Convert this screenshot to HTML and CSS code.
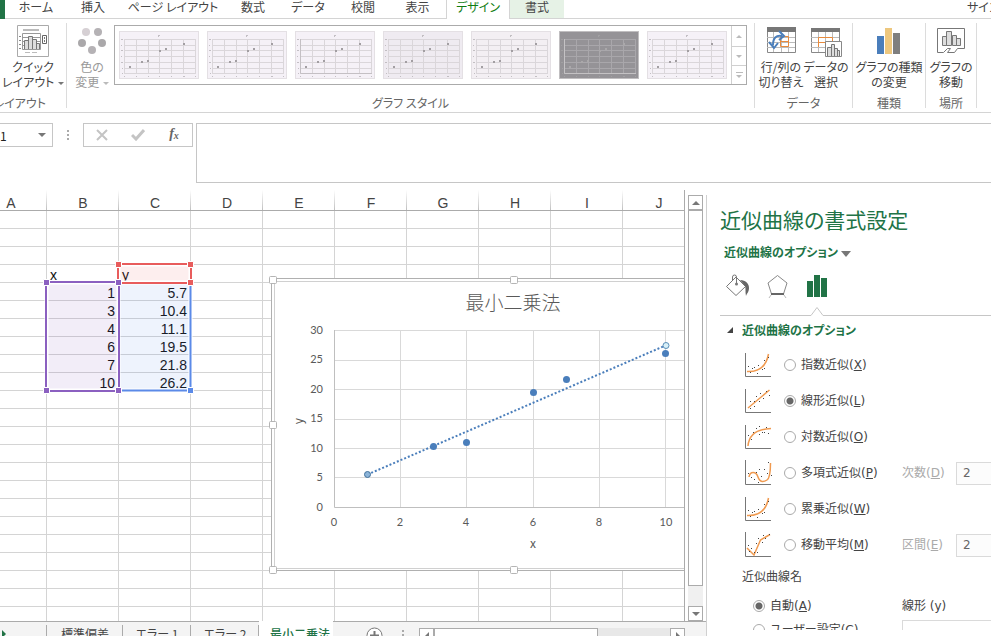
FILE: index.html
```html
<!DOCTYPE html>
<html lang="ja">
<head>
<meta charset="utf-8">
<title>最小二乗法</title>
<link rel="stylesheet" href="styles.css">
</head>
<body>
<svg class="defs" aria-hidden="true">
  <symbol id="thumb" viewBox="0 0 80 48">
    <g fill="none" stroke="currentColor">
      <path d="M5 8.500H77M5 14.500H77M5 19.500H77M5 25.500H77M5 31.500H77M5 37.500H77M5 42.500H77M5.500 8V43M17.500 8V43M29.500 8V43M40.500 8V43M52.500 8V43M64.500 8V43M76.500 8V43"/>
    </g>
    <g class="dots">
      <path d="M10 35h2v2h-2zM22 30h2v2h-2zM28 29h2v2h-2zM40 19h2v2h-2zM46 17h2v2h-2zM64 12h2v2h-2z"/>
      <path opacity=".6" d="M39 4h2v1h-2zM39 5h1v1h-1zM2 8h2v1h-2zM2 14h1v1h-1zM2 19h2v1h-2zM2 25h1v1h-1zM2 31h2v1h-2zM3 37h1v1h-1zM3 42h1v1h-1zM5 45h1v1h-1zM17 45h1v1h-1zM29 45h1v1h-1zM40 45h1v1h-1zM52 45h1v1h-1zM64 45h2v1h-2zM76 45h1v1h-1z"/>
    </g>
  </symbol>
  <symbol id="curve-up" viewBox="0 0 28 26">
    <path class="axis" d="M.5 1V24.500H26"/>
    <path class="curve" d="M2 19.500C13 20 21 16 23.500 2"/>
    <path class="pts" d="M3 14h1v1h-1zM5 20h1v1h-1zM7 16h1v1h-1zM9 15h1v1h-1zM12 21h1v1h-1zM13 13h1v1h-1zM17 17h1v1h-1zM19 16h1v1h-1zM19 8h1v1h-1zM23 5h1v1h-1z"/>
  </symbol>
</svg>

<nav class="tabs" aria-label="リボン">
  <span class="file"></span>
  <a href="#">ホーム</a><a href="#">挿入</a><a href="#">ページ レイアウト</a><a href="#">数式</a><a href="#">データ</a><a href="#">校閲</a><a href="#">表示</a>
  <a href="#" class="active">デザイン</a><a href="#" class="context">書式</a><a href="#" class="signin">サインイン</a>
</nav>

<section class="ribbon">
  <div class="group layout">
    <div class="tools">
      <button class="big">
        <svg width="32" height="32" viewBox="0 0 32 32"><path d="M.5.5h31v31H.5z" fill="#fff" stroke="#aaa"/><path d="M6 4h16v2H6zM8 27h5v1H8zM15 27h5v1h-5z" fill="#bbb"/><path d="M2 11h2v1H2zM2 15h2v1H2zM2 19h2v1H2zM2 23h2v1H2z" fill="#888"/><path d="M5.500 8.500h18v16h-18zM5 12.500h18M5 16.500h18M5 20.500h18" fill="none" stroke="#999"/><path d="M7.500 24V15.500h4V24M11.500 24V11.500h4V24M15.500 24V14.500h4V24M19.500 24V18.500h3V24" fill="#ddd" stroke="#777"/><path d="M25.500 10.500h4v8h-4z" fill="#fff" stroke="#666"/><path d="M27 12h1v2h-1zM27 15h1v2h-1z" fill="#777"/></svg>
        <span>クイック<br>レイアウト <i class="caret"></i></span>
      </button>
    </div>
    <div class="caption">グラフのレイアウト</div>
  </div>
  <div class="group styles">
    <div class="tools">
      <button class="big colors" disabled>
        <svg width="32" height="32" viewBox="0 0 32 32"><g fill="#b5b2b5"><circle cx="10" cy="7" r="4" fill="#d6d0d4"/><circle cx="22" cy="7" r="4"/><circle cx="6" cy="18" r="4" fill="#aaa8aa"/><circle cx="26" cy="18" r="4" fill="#aaa8aa"/><circle cx="16" cy="25" r="4"/></g></svg>
        <span>色の<br>変更 <i class="caret"></i></span>
      </button>
      <div class="gallery">
        <button aria-label="スタイル 1"><svg><use href="#thumb"/></svg></button>
        <button aria-label="スタイル 2"><svg><use href="#thumb"/></svg></button>
        <button aria-label="スタイル 3"><svg><use href="#thumb"/><path d="M5.500 8V42.500H77" fill="none" stroke="#c4c0c4"/></svg></button>
        <button aria-label="スタイル 4" class="shade"><svg><use href="#thumb"/></svg></button>
        <button aria-label="スタイル 5" class="fade"><svg><use href="#thumb"/></svg></button>
        <button aria-label="スタイル 6" class="dark"><svg><use href="#thumb"/><path d="M5.500 8V42.500H77" fill="none" stroke="#c4c2c4"/></svg></button>
        <button aria-label="スタイル 7"><svg><use href="#thumb"/></svg></button>
        <div class="more">
          <button aria-label="上へ"><i class="caret up"></i></button>
          <button aria-label="下へ"><i class="caret"></i></button>
          <button aria-label="その他" class="all"><i class="caret"></i></button>
        </div>
      </div>
    </div>
    <div class="caption">グラフ スタイル</div>
  </div>
  <div class="group data">
    <div class="tools">
      <button class="big">
        <svg width="32" height="32" viewBox="0 0 32 32"><path d="M2 2h29v5H2z" fill="#777"/><path d="M2.500 7v20.500h28V7" fill="#fff" stroke="#888"/><path d="M8.500 7v20M16.500 7v20M23.500 7v20M2 12.500h28M2 17.500h28M2 22.500h28" stroke="#bbb"/><path d="M15.500 11.500h8v10h-8zM15 16.500h8" fill="none" stroke="#e88b3d"/><path d="M8 20C8 13 11 10 17 11" fill="none" stroke="#4a7ebb" stroke-width="2"/><path d="M4 17l5 6 4-5M14 6l5 5-5 4" fill="none" stroke="#4a7ebb" stroke-width="2"/></svg>
        <span>行/列の<br>切り替え</span>
      </button>
      <button class="big">
        <svg width="32" height="32" viewBox="0 0 32 32"><path d="M1 3h29v4H1z" fill="#777"/><path d="M1.500 7v20.500h28V7" fill="#fff" stroke="#888"/><path d="M8.500 7v20M15.500 7v20M22.500 7v20M1 12.500h28M1 17.500h28M1 22.500h28" stroke="#bbb"/><path d="M8.500 22V12.500h14V16M8 17.500h7" fill="none" stroke="#e88b3d"/><path d="M15.500 16.500h16v15h-16z" fill="#fff" stroke="#888"/><path d="M17.500 31v-8.500h4V31M21.500 31V19.500h3V31M24.500 31v-7.500h3V31M27.500 31v-5.500h2V31" fill="#ddd" stroke="#777"/></svg>
        <span>データの<br>選択</span>
      </button>
    </div>
    <div class="caption">データ</div>
  </div>
  <div class="group kind">
    <div class="tools">
      <button class="big">
        <svg width="32" height="32" viewBox="0 0 32 32"><path d="M4 11h7v18H4z" fill="#4a7ebb"/><path d="M12 3h7v26h-7z" fill="#edc77e"/><path d="M20 8h7v21h-7z" fill="#7f7f7f"/></svg>
        <span>グラフの種類<br>の変更</span>
      </button>
    </div>
    <div class="caption">種類</div>
  </div>
  <div class="group place">
    <div class="tools">
      <button class="big">
        <svg width="32" height="32" viewBox="0 0 32 32"><path d="M2.500 27.500v-24h27v20h-7l-3 4h-7l3-4h-3l-4 4z" fill="#fff" stroke="#777"/><path d="M7.500 20.500v-9h4v9zM11.500 20.500v-14h5v14zM17.500 20.500v-10h4v10zM21.500 20.500v-7h4v7z" fill="#ddd" stroke="#777"/></svg>
        <span>グラフの<br>移動</span>
      </button>
    </div>
    <div class="caption">場所</div>
  </div>
</section>

<section class="formula">
  <div class="namebox"><input aria-label="名前ボックス" value="1"><i class="caret"></i></div>
  <i class="grip"></i>
  <div class="fxbox">
    <button aria-label="キャンセル"><svg width="12" height="12" viewBox="0 0 12 12"><path d="M1 1l10 10M11 1L1 11" stroke="#c4c4c4" stroke-width="2"/></svg></button>
    <button aria-label="入力"><svg width="14" height="12" viewBox="0 0 14 12"><path d="M1 6l4 4 8-9" fill="none" stroke="#c4c4c4" stroke-width="3"/></svg></button>
    <button aria-label="関数の挿入" class="fx">f<sub>x</sub></button>
  </div>
  <textarea aria-label="数式バー"></textarea>
</section>

<main>
  <section class="book">
    <div class="view">
      <div class="sheet">
        <table>
          <thead><tr><th>A</th><th>B</th><th>C</th><th>D</th><th>E</th><th>F</th><th>G</th><th>H</th><th>I</th><th>J</th></tr></thead>
          <tbody id="cells"></tbody>
        </table>
        <svg class="ranges" width="152" height="134" viewBox="42 260 152 134">
          <path d="M46 282h72v108H46z" fill="#7b4fb8" fill-opacity=".1"/>
          <path d="M118 282h72v108h-72z" fill="#5b8def" fill-opacity=".1"/>
          <path d="M118 264h72v18h-72z" fill="#e85a5a" fill-opacity=".1"/>
          <path d="M118.500 264.500h72v18h-72zM46.500 282.500h72v108h-72zM118 390.500h72.500V282" fill="none" stroke="#fff" stroke-width="4"/>
          <path d="M118 390.500h72.500V282" fill="none" stroke="#5b8ae8" stroke-width="2"/>
          <path d="M118 264h73v19h-73z" fill="none" stroke="#e85c5c" stroke-width="2"/>
          <path d="M46 282h73v109H46z" fill="none" stroke="#8b60c0" stroke-width="2"/>
          <g stroke="#fff"><path d="M115.500 261.500h6v6h-6zM187.500 261.500h6v6h-6zM187.500 279.500h6v6h-6z" fill="#e85c5c"/><path d="M43.500 279.500h6v6h-6zM115.500 279.500h6v6h-6zM43.500 387.500h6v6h-6zM115.500 387.500h6v6h-6z" fill="#8b60c0"/><path d="M187.500 387.500h6v6h-6z" fill="#5b8ae8"/></g>
        </svg>
        <svg class="chart" width="490" height="300" viewBox="269 275 490 300">
          <path d="M271.500 278.500h486v292h-486z" fill="#fff" stroke="#b0b0b0"/>
          <path d="M274.500 281.500h480v287h-480z" fill="#fff" stroke="#d0d0d0"/>
          <path d="M334 330.500h397M334 360.500h397M334 389.500h397M334 419.500h397M334 448.500h397M334 477.500h397M400.500 330v177M466.500 330v177M533.500 330v177M599.500 330v177M665.500 330v177" stroke="#d9d9d9"/>
          <path d="M334.500 330V507.500H731" fill="none" stroke="#bfbfbf"/>
          <path d="M367.500 474.500L665.500 345.500" stroke="#4a7ebb" stroke-width="2" stroke-dasharray="2 2"/>
          <g fill="#4a7ebb"><circle cx="433.500" cy="446.500" r="3.500"/><circle cx="466.500" cy="442.500" r="3.500"/><circle cx="533.500" cy="392.500" r="3.500"/><circle cx="566.500" cy="379.500" r="3.500"/><circle cx="665.500" cy="353.500" r="3.500"/></g>
          <circle cx="367.500" cy="474.500" r="3" fill="#8cb4d8" stroke="#41719c"/><circle cx="666" cy="345.500" r="3" fill="#d8f0f8" stroke="#5b8fb8"/>
          <g fill="#fff" stroke="#b5b5b5"><rect x="269.500" y="276.500" width="7" height="7" rx="1"/><rect x="510.500" y="276.500" width="7" height="7" rx="1"/><rect x="269.500" y="421.500" width="7" height="7" rx="1"/><rect x="269.500" y="566.500" width="7" height="7" rx="1"/><rect x="510.500" y="566.500" width="7" height="7" rx="1"/></g>
          <text class="title" x="513" y="310">最小二乗法</text>
          <g class="ylab"><text x="323" y="334">30</text><text x="323" y="363">25</text><text x="323" y="393">20</text><text x="323" y="422">15</text><text x="323" y="452">10</text><text x="323" y="481">5</text><text x="323" y="511">0</text></g>
          <g class="xlab"><text x="334" y="526">0</text><text x="400" y="526">2</text><text x="466" y="526">4</text><text x="533" y="526">6</text><text x="599" y="526">8</text><text x="666" y="526">10</text></g>
          <text class="axisname" x="533" y="548">x</text>
          <text class="axisname" transform="translate(303 421) rotate(-90)">y</text>
        </svg>
      </div>
      <div class="vscroll">
        <button aria-label="上にスクロール"><i class="caret up"></i></button>
        <div class="thumb"></div><div class="track"></div>
        <button aria-label="下にスクロール"><i class="caret"></i></button>
      </div>
    </div>
    <div class="sheets">
      <div class="edge"><i class="next"></i></div>
      <a href="#" class="t1">標準偏差</a><a href="#" class="t2">エラー 1</a><a href="#" class="t2">エラー 2</a><a href="#" class="on">最小二乗法</a>
      <div class="rest">
        <button class="add" aria-label="新しいシート"><svg width="17" height="17" viewBox="0 0 17 17"><circle cx="8.500" cy="8.500" r="7.500" fill="#fff" stroke="#777"/><path d="M8.500 4v9M4 8.500h9" stroke="#777" stroke-width="2"/></svg></button>
        <i class="grip"></i>
        <div class="hscroll"><button aria-label="左"><i class="tri left"></i></button><div class="thumb"></div><div class="track"></div><button aria-label="右"><i class="tri"></i></button></div>
      </div>
    </div>
  </section>

  <aside class="pane">
    <div class="inner">
      <h1>近似曲線の書式設定</h1>
      <button class="picker">近似曲線のオプション <i class="caret"></i></button>
      <div class="icons">
        <button aria-label="塗りつぶしと線"><svg width="26" height="26" viewBox="0 0 26 26"><path d="M1.500 13.500L11 4l9.500 9.500L11 22.500z" fill="#fff" stroke="#777"/><path d="M7.500 8V4a2 2 0 0 1 4 0v7" fill="none" stroke="#777"/><circle cx="11.500" cy="11" r="1.500" fill="#777"/><path d="M15 7c6 0 9 4 9 8s-2 5-3 8c-1-4 0-8-1-10z" fill="#666"/></svg></button>
        <button aria-label="効果"><svg width="26" height="26" viewBox="0 0 26 26"><path d="M12.500 2.500L22 10l-3.500 11h-12L3 10z" fill="#fff" stroke="#888"/><path d="M6 21h13" stroke="#666" stroke-width="2"/><path d="M6 22l-2 3M19 22l2 3" stroke="#bbb"/></svg></button>
        <button aria-label="近似曲線のオプション"><svg width="26" height="26" viewBox="0 0 26 26"><path d="M2 8h6v16H2zM9 2h6v22H9zM16 5h6v19h-6z" fill="#217346"/></svg></button>
      </div>
      <svg class="rule" height="10" width="600" viewBox="0 0 600 10"><path d="M0 9.500h91l6-8 6 8h497" fill="none" stroke="#c6c6c6"/></svg>
      <h2><i class="open"></i>近似曲線のオプション</h2>
      <div class="opt"><svg><use href="#curve-up"/></svg><input type="radio" name="t" id="r1"><label for="r1">指数近似(<u>X</u>)</label></div>
      <div class="opt"><svg viewBox="0 0 28 26"><path class="axis" d="M.5 1V24.500H26"/><path class="curve" d="M3 20L24.500 2"/><path class="pts" d="M5 20h1v1h-1zM5 13h1v1h-1zM9 18h1v1h-1zM9 13h1v1h-1zM11 8h1v1h-1zM14 13h1v1h-1zM15 5h1v1h-1zM18 10h1v1h-1zM21 3h1v1h-1zM24 7h1v1h-1z"/></svg><input type="radio" name="t" id="r2" checked><label for="r2">線形近似(<u>L</u>)</label></div>
      <div class="opt"><svg viewBox="0 0 28 26"><path class="axis" d="M.5 1V24.500H26"/><path class="curve" d="M3 22C4 10 12 5 26 4.500"/><path class="pts" d="M3 11h1v1h-1zM6 15h1v1h-1zM8 8h1v1h-1zM11 4h1v1h-1zM14 2h1v1h-1zM14 10h1v1h-1zM17 8h1v1h-1zM19 8h1v1h-1zM21 3h1v1h-1zM23 9h1v1h-1z"/></svg><input type="radio" name="t" id="r3"><label for="r3">対数近似(<u>O</u>)</label></div>
      <div class="opt"><svg viewBox="0 0 28 26"><path class="axis" d="M.5 0V24.500H26"/><path class="curve" d="M4 17C5 11 11 11 13 17S19 22 22 20 25.500 12 25.500 3"/><path class="pts" d="M3 13h1v1h-1zM6 17h1v1h-1zM9 19h1v1h-1zM11 12h1v1h-1zM13 22h1v1h-1zM14 9h1v1h-1zM16 16h1v1h-1zM19 9h1v1h-1zM22 13h1v1h-1zM23 2h1v1h-1zM26 15h1v1h-1z"/></svg><input type="radio" name="t" id="r4"><label for="r4">多項式近似(<u>P</u>)</label><label class="off" for="n1">次数(<u>D</u>)</label><input class="num" id="n1" value="2"></div>
      <div class="opt"><svg><use href="#curve-up"/></svg><input type="radio" name="t" id="r5"><label for="r5">累乗近似(<u>W</u>)</label></div>
      <div class="opt"><svg viewBox="0 0 28 26"><path class="axis" d="M.5 0V24.500H26"/><path class="curve" d="M2 16l7 7L15.500 8 25 2.500"/><path class="pts" d="M3 13h1v1h-1zM4 19h1v1h-1zM6 16h1v1h-1zM9 20h1v1h-1zM11 11h1v1h-1zM12 20h1v1h-1zM13 6h1v1h-1zM17 10h1v1h-1zM18 3h1v1h-1zM20 6h1v1h-1zM24 2h1v1h-1z"/></svg><input type="radio" name="t" id="r6"><label for="r6">移動平均(<u>M</u>)</label><label class="off" for="n2">区間(<u>E</u>)</label><input class="num" id="n2" value="2"></div>
      <h3>近似曲線名</h3>
      <div class="name"><input type="radio" name="n" id="a1" checked><label for="a1">自動(<u>A</u>)</label><span>線形 (y)</span></div>
      <div class="name"><input type="radio" name="n" id="a2"><label for="a2">ユーザー設定(<u>C</u>)</label><input class="custom" aria-label="ユーザー設定の名前"></div>
    </div>
  </aside>
</main>
<script src="sheet.js"></script>
</body>
</html>
```
FILE: sheet.js
```js
// Cell values by row number; each entry holds columns B and C.
const values = {
  4: ['x', 'y'],
  5: ['1', '5.7'],
  6: ['3', '10.4'],
  7: ['4', '11.1'],
  8: ['6', '19.5'],
  9: ['7', '21.8'],
  10: ['10', '26.2'],
};
const body = document.getElementById('cells');
for (let r = 1; r <= 24; r++) {
  const row = body.insertRow();
  for (let c = 0; c < 10; c++) {
    const cell = row.insertCell();
    const v = values[r] && (c === 1 || c === 2) ? values[r][c - 1] : '';
    cell.textContent = v;
    if (v && !isNaN(v)) cell.className = 'n';
  }
}
```
FILE: styles.css
```css
* { box-sizing: border-box; }
body {
  margin: 0;
  height: 100vh;
  overflow: hidden;
  display: flex;
  flex-direction: column;
  background: #fff;
  color: #444;
  font: 12px/15px "Noto Sans CJK JP", sans-serif;
  font-feature-settings: "palt";
}
button, input, textarea { font: inherit; font-feature-settings: inherit; color: inherit; border: 0; background: none; padding: 0; margin: 0; border-radius: 0; }
a { color: inherit; text-decoration: none; }
.defs { display: none; }
.caret { display: inline-block; border: 3px solid transparent; border-top-color: #777; border-bottom: 0; vertical-align: middle; }
.caret.up { border-top: 0; border-bottom: 3px solid #777; }

.tabs { flex: none; height: 19px; display: grid; grid-template-columns: 5px 62px 52px 108px 52px 58px 52px 57px 64px 54px 1fr; }
.tabs > * { border-bottom: 1px solid #d4d4d4; text-align: center; line-height: 14px; white-space: nowrap; overflow: hidden; }
.tabs .file { background: #217346; border-color: #217346; }
.tabs .active { color: #107c10; border: solid #d4d4d4; border-width: 0 1px; }
.tabs .context { background: #e6f2e6; }
.tabs .signin { text-align: right; direction: ltr; padding-left: 403px; }

.ribbon { flex: none; display: flex; padding: 4px 14px 4px 0; border-bottom: 1px solid #d4d4d4; }
.group { flex: none; height: 85px; border-right: 1px solid #dcdcdc; }
.tools { height: 73px; display: flex; }
.caption { text-align: center; line-height: 14px; color: #666; white-space: nowrap; }
.big { display: flex; flex-direction: column; align-items: center; white-space: nowrap; padding-top: 2px; }
.big svg { flex: none; margin-bottom: 2px; }
.big .caret { margin-left: 1px; }
.layout { width: 67px; overflow-x: clip; }
.layout .tools { justify-content: center; }
.layout .caption { display: flex; justify-content: flex-end; padding-right: 20px; }
.styles { flex: 1; min-width: 0; }
.colors { width: 47px; padding-left: 3px; color: #999; }
.colors .caret { border-top-color: #bbb; }
.data { width: 98px; }
.data .tools { justify-content: center; gap: 1px; }
.data .big { width: 44px; }
.kind { width: 73px; }
.kind .tools, .place .tools { justify-content: center; }
.place { width: 51px; }

.gallery { flex: 1; min-width: 0; margin: 2px 7px 0 0; height: 60px; border: 1px solid #ababab; display: flex; padding-left: 4px; align-items: center; }
.gallery > button { flex: none; width: 80px; height: 48px; background: #f5f1f7; outline: 1px solid #e4e0e4; outline-offset: -1px; color: #dad6da; }
.gallery > button + button { margin-left: 8px; }
.gallery > button svg { display: block; width: 80px; height: 48px; fill: #a29ea2; }
.gallery .shade { background: #efebf1; }
.gallery .fade { background: #f3eff3; }
.gallery > .dark { background: #959397; color: #a9a7ab; outline-color: #c0bec0; }
.gallery .dark svg { fill: #aaa8aa; }
.more { flex: none; margin-left: auto; width: 15px; height: 58px; border-left: 1px solid #d0d0d0; display: grid; grid-template-rows: 20px 19px 19px; }
.more button + button { border-top: 1px solid #d0d0d0; }
.more button { display: flex; align-items: center; justify-content: center; }
.more .caret { border-top-color: #bbb; }
.more .caret.up { border-bottom-color: #bbb; }
.more .all { flex-direction: column; gap: 2px; }
.more .all::before { content: ""; width: 7px; height: 1px; background: #bbb; }

.formula { flex: none; height: 77px; padding-top: 10px; display: flex; align-items: flex-start; }
.namebox { width: 53px; height: 24px; border: 1px solid #c6c6c6; border-left: 0; display: flex; align-items: center; justify-content: space-between; padding-right: 6px; }
.namebox input { width: 30px; color: #222; }
.namebox .caret, .picker .caret { border-width: 4px 4px 0; }
.grip { width: 2px; height: 10px; margin: 7px 14px 0; background: repeating-linear-gradient(#aaa 0 2px, transparent 2px 4px); }
.fxbox { width: 110px; height: 24px; border: 1px solid #c6c6c6; display: grid; grid-template-columns: repeat(3, 36px); place-items: center; }
.fxbox svg { display: block; }
.fx { font: italic bold 14px/16px "Liberation Serif", serif; color: #666; }
.fx sub { font-size: 10px; vertical-align: -1px; }
.formula textarea { flex: 1; margin: 0 0 7px 3px; height: 60px; border: 1px solid #c6c6c6; border-right: 0; resize: none; }

main { flex: 1; min-height: 0; display: flex; }
.book { flex: 1; min-width: 0; display: flex; flex-direction: column; overflow: hidden; }
.view { flex: 1; min-height: 0; display: flex; }
.sheet { flex: 1; position: relative; overflow: hidden; border-right: 1px solid #ababab; }
table { table-layout: fixed; width: 720px; margin-left: -25px; border-spacing: 0; font: 14px/13px "Liberation Sans", sans-serif; color: #111; }
th { height: 21px; padding: 6px 0 0; font-weight: 400; color: #444; border-bottom: 1px solid #ababab; background: linear-gradient(#fff, #c0c0c0) right / 1px 100% no-repeat; }
td { height: 18px; padding: 4px 3px 0; border: solid #d4d4d4; border-width: 0 1px 1px 0; white-space: nowrap; }
.n { text-align: right; }
.ranges { position: absolute; left: 42px; top: 70px; }
.chart { position: absolute; left: 269px; top: 85px; font: 11px Lato, sans-serif; fill: #595959; }
.chart .title { font: 300 19px "Noto Sans CJK JP", sans-serif; text-anchor: middle; }
.ylab { text-anchor: end; }
.xlab, .axisname { text-anchor: middle; }
.axisname { font: 12px "Noto Sans CJK JP", sans-serif; }

.vscroll { flex: none; width: 21px; padding: 5px 3px 0; display: flex; flex-direction: column; }
.vscroll button, .hscroll button { flex: none; width: 15px; height: 15px; border: 1px solid #ababab; background: #fff; display: flex; align-items: center; justify-content: center; }
.vscroll .caret { border-width: 0 4px 4px; }
.vscroll .caret:not(.up) { border-width: 4px 4px 0; }
.vscroll .thumb { flex: 19; border: 1px solid #ababab; width: 15px; }
.vscroll .track { flex: 1; background: #f0f0f0; width: 15px; }

.sheets { flex: none; height: 15px; display: flex; background: #f4f4f4; overflow: hidden; }
.sheets > * { flex: none; height: 30px; border-top: 1px solid #ababab; }
.sheets a { text-align: center; padding-top: 4px; white-space: nowrap; background: linear-gradient(#ababab, #ababab) right 3px / 1px 30px no-repeat; }
.edge { width: 47px; background: linear-gradient(#ababab, #ababab) right 3px / 1px 30px no-repeat; }
.next { display: block; margin: 8px 0 0 2px; width: 0; border: 4px solid transparent; border-left-color: #217346; border-right: 0; }
.t1 { width: 76px; }
.t2 { width: 68px; }
.sheets .on { width: 74px; border-top-color: #fff; background: #fff; color: #217346; font-weight: 500; padding-left: 11px; text-align: left; overflow: hidden; }
.sheets .rest { flex: 1; display: flex; padding-top: 5px; }
.add { width: 17px; height: 17px; margin-left: 33px; }
.rest .grip { margin: 3px 15px 0 19px; }
.hscroll { flex: 1; display: flex; margin: 1px 21px 0 0; height: 15px; }
.hscroll .thumb { flex: 163; background: #fff; border: 1px solid #ababab; }
.hscroll .track { flex: 73; background: #e8e8e8; }
.tri { border: 4px solid transparent; border-left-color: #777; border-right: 0; }
.tri.left { border-left: 0; border-right: 4px solid #777; }

.pane { flex: none; width: 285px; margin: 5px 0 0; padding: 0 0 6px 13px; border-left: 1px solid #d0d0d0; }
.inner { height: 100%; overflow: hidden; }
h1 { margin: 9px 0 0; font-size: 21px; font-weight: 400; line-height: 30px; color: #217346; white-space: nowrap; }
.picker { display: block; margin: 10px 0 0 4px; font-weight: 700; color: #217346; line-height: 16px; }
.picker .caret { border-width: 6px 5px 0; }
.icons { display: flex; gap: 14px; margin: 13px 0 0 5px; }
.icons button, .icons svg { display: block; width: 26px; height: 26px; }
.rule { display: block; margin-top: 7px; }
h2 { margin: 6px 0 9px; font-size: 12px; line-height: 16px; color: #217346; display: flex; align-items: center; }
.open { border: solid transparent; border-width: 0 0 6px 6px; border-bottom-color: #444; margin: 0 9px 0 7px; }
.opt { height: 36px; display: grid; grid-template-columns: 39px 17px 101px 54px 1fr; align-items: center; padding-left: 25px; white-space: nowrap; }
.opt, .name { font-family: "DejaVu Sans", "Noto Sans CJK JP", sans-serif; }
.opt svg { width: 28px; height: 26px; display: block; }
.axis { fill: none; stroke: #777; }
.curve { fill: none; stroke: #f09a50; stroke-width: 1.500; }
.pts { fill: #444; }
input[type="radio"] { appearance: none; width: 12px; height: 12px; border: 1px solid #aaa; border-radius: 50%; background: #fff; }
input[type="radio"]:checked { background: radial-gradient(#666 0 3px, #fff 4px); }
u { text-underline-offset: 1px; }
.off { color: #aaa; }
.num { height: 23px; width: 100%; border: 1px solid #dadada; border-right: 0; padding-left: 6px; color: #666; background: #fcfcfc; }
h3 { margin: 5px 0 0 22px; font-size: 12px; font-weight: 400; line-height: 16px; }
.name { display: grid; grid-template-columns: 17px 132px 1fr; align-items: center; padding-left: 33px; height: 24px; white-space: nowrap; }
h3 + .name { margin-top: 10px; }
.custom { height: 20px; border: 1px solid #dadada; border-right: 0; }
```
